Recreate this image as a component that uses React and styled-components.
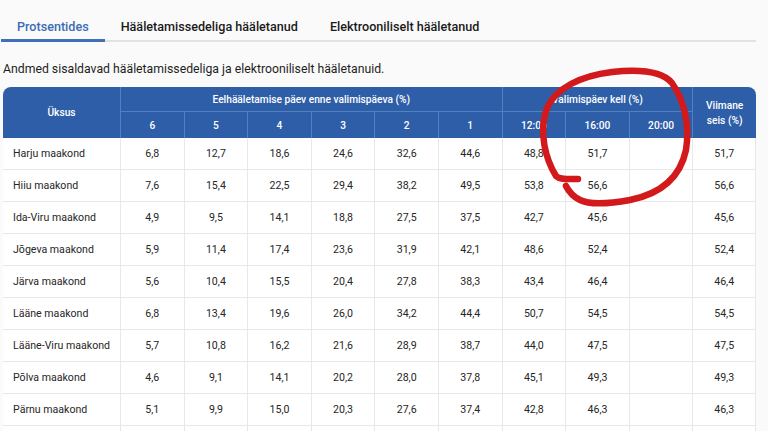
import React from "react";
import styled, { createGlobalStyle } from "styled-components";

const GlobalStyle = createGlobalStyle`
  body {
    margin: 0;
    background: #f6f6f6;
    font-family: Roboto, "Liberation Sans", sans-serif;
    color: #222;
  }
`;

const Page = styled.div`
  position: relative;
  width: 768px;
  height: 431px;
  overflow: hidden;
  background: #fafafa;
`;

const Content = styled.div`
  width: 753px;
  padding-left: 3px;
`;

const Tabs = styled.div`
  display: flex;
  align-items: flex-start;
  height: 40px;
  margin-left: -2px;
  border-bottom: 2px solid #e2e2e2;
`;

const Tab = styled.div`
  box-sizing: border-box;
  height: 42px;
  margin-bottom: -2px;
  padding: 13px 16px 0;
  display: flex;
  align-items: center;
  font-size: 12.6px;
  font-weight: 500;
  color: ${(p) => (p.$active ? "#3a6cb6" : "#1a1a1a")};
  border-bottom: 3px solid ${(p) => (p.$active ? "#3f70b8" : "transparent")};
`;

const Note = styled.p`
  margin: 19px 0 0;
  font-size: 12.25px;
  line-height: 16px;
  color: #1e1e1e;
`;

const Table = styled.table`
  margin-top: 10px;
  width: 753px;
  table-layout: fixed;
  border-collapse: separate;
  border-spacing: 0;
  background: #fff;
  border-radius: 8px 8px 0 0;
  overflow: hidden;
`;

const HeadCell = styled.th`
  background: #2e5ea7;
  color: #fff;
  font-size: 10.2px;
  font-weight: 500;
  text-align: center;
  padding: 0;
  height: ${(p) => p.$h || 24}px;
  line-height: 15px;
  border-left: ${(p) => (p.$first ? "none" : "1px solid #5281c2")};
  border-top: ${(p) => (p.$sub ? "1px solid #5281c2" : "none")};
`;

const Cell = styled.td`
  height: 31px;
  padding: 0 0 0 ${(p) => (p.$name ? "10px" : "0")};
  font-size: 10.6px;
  color: #262626;
  text-align: ${(p) => (p.$name ? "left" : "center")};
  border-bottom: 1px solid #e8e8e8;
  border-left: ${(p) => (p.$name ? "none" : "1px solid #e8e8e8")};
  border-right: ${(p) => (p.$last ? "1px solid #e8e8e8" : "none")};
  white-space: nowrap;
`;

const Annotation = styled.svg`
  position: absolute;
  left: 0;
  top: 0;
  pointer-events: none;
`;

const rows = [
  ["Harju maakond", "6,8", "12,7", "18,6", "24,6", "32,6", "44,6", "48,8", "51,7", "", "51,7"],
  ["Hiiu maakond", "7,6", "15,4", "22,5", "29,4", "38,2", "49,5", "53,8", "56,6", "", "56,6"],
  ["Ida-Viru maakond", "4,9", "9,5", "14,1", "18,8", "27,5", "37,5", "42,7", "45,6", "", "45,6"],
  ["Jõgeva maakond", "5,9", "11,4", "17,4", "23,6", "31,9", "42,1", "48,6", "52,4", "", "52,4"],
  ["Järva maakond", "5,6", "10,4", "15,5", "20,4", "27,8", "38,3", "43,4", "46,4", "", "46,4"],
  ["Lääne maakond", "6,8", "13,4", "19,6", "26,0", "34,2", "44,4", "50,7", "54,5", "", "54,5"],
  ["Lääne-Viru maakond", "5,7", "10,8", "16,2", "21,6", "28,9", "38,7", "44,0", "47,5", "", "47,5"],
  ["Põlva maakond", "4,6", "9,1", "14,1", "20,2", "28,0", "37,8", "45,1", "49,3", "", "49,3"],
  ["Pärnu maakond", "5,1", "9,9", "15,0", "20,3", "27,6", "37,4", "42,8", "46,3", "", "46,3"],
  ["", "", "", "", "", "", "", "", "", "", ""],
];

const days = ["6", "5", "4", "3", "2", "1"];
const times = ["12:00", "16:00", "20:00"];

export default function App() {
  return (
    <Page>
      <GlobalStyle />
      <Content>
        <Tabs>
          <Tab $active>Protsentides</Tab>
          <Tab>Hääletamissedeliga hääletanud</Tab>
          <Tab>Elektrooniliselt hääletanud</Tab>
        </Tabs>
        <Note>Andmed sisaldavad hääletamissedeliga ja elektrooniliselt hääletanuid.</Note>
        <Table>
          <colgroup>
            <col style={{ width: 117 }} />
            {Array.from({ length: 10 }).map((_, i) => (
              <col key={i} />
            ))}
          </colgroup>
          <thead>
            <tr>
              <HeadCell $first rowSpan={2}>Üksus</HeadCell>
              <HeadCell colSpan={6}>Eelhääletamise päev enne valimispäeva (%)</HeadCell>
              <HeadCell colSpan={3}>Valimispäev kell (%)</HeadCell>
              <HeadCell rowSpan={2}>
                Viimane
                <br />
                seis (%)
              </HeadCell>
            </tr>
            <tr>
              {[...days, ...times].map((d) => (
                <HeadCell key={d} $sub $h={26}>
                  {d}
                </HeadCell>
              ))}
            </tr>
          </thead>
          <tbody>
            {rows.map((r, ri) => (
              <tr key={ri}>
                {r.map((v, i) => (
                  <Cell key={i} $name={i === 0} $last={i === r.length - 1}>
                    {v}
                  </Cell>
                ))}
              </tr>
            ))}
          </tbody>
        </Table>
      </Content>
      <Annotation width="768" height="431" viewBox="0 0 768 431">
        <path
          d="M578 179 C568 179 560 180 556 176 C546 160 538 132 547 108 C556 88 580 76 612 72 C640 69 662 71 672 83 C684 100 690 125 686 150 C680 178 660 194 630 200 C608 204 590 205 580 200 C572 196 568 190 566 186"
          fill="none"
          stroke="#d2191b"
          strokeWidth="6.5"
          strokeLinecap="round"
          strokeLinejoin="round"
        />
      </Annotation>
    </Page>
  );
}
